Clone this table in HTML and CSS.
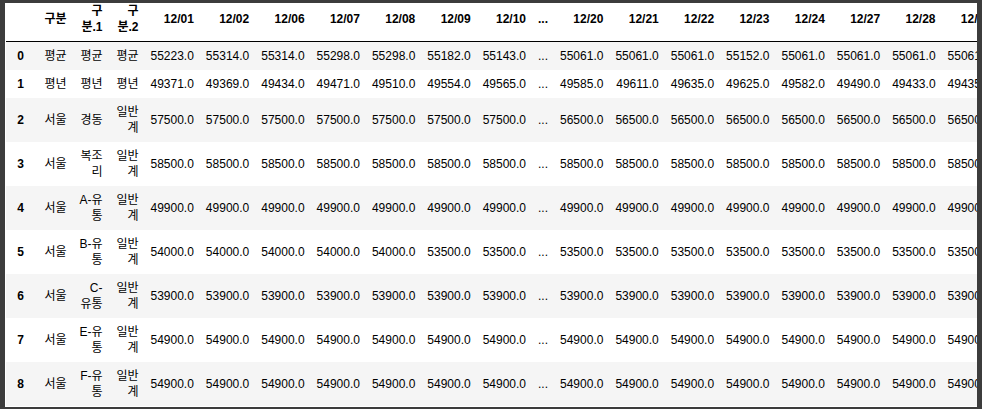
FILE: index.html
```html
<!DOCTYPE html>
<html lang="ko">
<head>
<meta charset="utf-8">
<title>DataFrame</title>
<link rel="stylesheet" href="styles.css">
</head>
<body>
<div class="frame">
  <div class="output">
    <table class="dataframe">
      <colgroup>
        <col class="c-idx"><col class="c-gu"><col class="c-gu1"><col class="c-gu2">
        <col class="c-num"><col class="c-num"><col class="c-num"><col class="c-num"><col class="c-num"><col class="c-num"><col class="c-num">
        <col class="c-dots">
        <col class="c-num"><col class="c-num"><col class="c-num"><col class="c-num"><col class="c-num"><col class="c-num"><col class="c-num"><col class="c-num"><col class="c-num">
      </colgroup>
      <thead>
        <tr>
          <th></th><th>구분</th><th>구<br>분.1</th><th>구<br>분.2</th>
          <th>12/01</th><th>12/02</th><th>12/06</th><th>12/07</th><th>12/08</th><th>12/09</th><th>12/10</th>
          <th>...</th>
          <th>12/20</th><th>12/21</th><th>12/22</th><th>12/23</th><th>12/24</th><th>12/27</th><th>12/28</th><th>12/29</th><th>12/30</th>
        </tr>
      </thead>
      <tbody>
        <tr>
          <th>0</th><td>평균</td><td>평균</td><td>평균</td>
          <td>55223.0</td><td>55314.0</td><td>55314.0</td><td>55298.0</td><td>55298.0</td><td>55182.0</td><td>55143.0</td>
          <td>...</td>
          <td>55061.0</td><td>55061.0</td><td>55061.0</td><td>55152.0</td><td>55061.0</td><td>55061.0</td><td>55061.0</td><td>55061.0</td><td>55061.0</td>
        </tr>
        <tr>
          <th>1</th><td>평년</td><td>평년</td><td>평년</td>
          <td>49371.0</td><td>49369.0</td><td>49434.0</td><td>49471.0</td><td>49510.0</td><td>49554.0</td><td>49565.0</td>
          <td>...</td>
          <td>49585.0</td><td>49611.0</td><td>49635.0</td><td>49625.0</td><td>49582.0</td><td>49490.0</td><td>49433.0</td><td>49435.0</td><td>49435.0</td>
        </tr>
        <tr>
          <th>2</th><td>서울</td><td>경동</td><td>일반<br>계</td>
          <td>57500.0</td><td>57500.0</td><td>57500.0</td><td>57500.0</td><td>57500.0</td><td>57500.0</td><td>57500.0</td>
          <td>...</td>
          <td>56500.0</td><td>56500.0</td><td>56500.0</td><td>56500.0</td><td>56500.0</td><td>56500.0</td><td>56500.0</td><td>56500.0</td><td>56500.0</td>
        </tr>
        <tr>
          <th>3</th><td>서울</td><td>복조<br>리</td><td>일반<br>계</td>
          <td>58500.0</td><td>58500.0</td><td>58500.0</td><td>58500.0</td><td>58500.0</td><td>58500.0</td><td>58500.0</td>
          <td>...</td>
          <td>58500.0</td><td>58500.0</td><td>58500.0</td><td>58500.0</td><td>58500.0</td><td>58500.0</td><td>58500.0</td><td>58500.0</td><td>58500.0</td>
        </tr>
        <tr>
          <th>4</th><td>서울</td><td>A-유<br>통</td><td>일반<br>계</td>
          <td>49900.0</td><td>49900.0</td><td>49900.0</td><td>49900.0</td><td>49900.0</td><td>49900.0</td><td>49900.0</td>
          <td>...</td>
          <td>49900.0</td><td>49900.0</td><td>49900.0</td><td>49900.0</td><td>49900.0</td><td>49900.0</td><td>49900.0</td><td>49900.0</td><td>49900.0</td>
        </tr>
        <tr>
          <th>5</th><td>서울</td><td>B-유<br>통</td><td>일반<br>계</td>
          <td>54000.0</td><td>54000.0</td><td>54000.0</td><td>54000.0</td><td>54000.0</td><td>53500.0</td><td>53500.0</td>
          <td>...</td>
          <td>53500.0</td><td>53500.0</td><td>53500.0</td><td>53500.0</td><td>53500.0</td><td>53500.0</td><td>53500.0</td><td>53500.0</td><td>53500.0</td>
        </tr>
        <tr>
          <th>6</th><td>서울</td><td>C-<br>유통</td><td>일반<br>계</td>
          <td>53900.0</td><td>53900.0</td><td>53900.0</td><td>53900.0</td><td>53900.0</td><td>53900.0</td><td>53900.0</td>
          <td>...</td>
          <td>53900.0</td><td>53900.0</td><td>53900.0</td><td>53900.0</td><td>53900.0</td><td>53900.0</td><td>53900.0</td><td>53900.0</td><td>53900.0</td>
        </tr>
        <tr>
          <th>7</th><td>서울</td><td>E-유<br>통</td><td>일반<br>계</td>
          <td>54900.0</td><td>54900.0</td><td>54900.0</td><td>54900.0</td><td>54900.0</td><td>54900.0</td><td>54900.0</td>
          <td>...</td>
          <td>54900.0</td><td>54900.0</td><td>54900.0</td><td>54900.0</td><td>54900.0</td><td>54900.0</td><td>54900.0</td><td>54900.0</td><td>54900.0</td>
        </tr>
        <tr>
          <th>8</th><td>서울</td><td>F-유<br>통</td><td>일반<br>계</td>
          <td>54900.0</td><td>54900.0</td><td>54900.0</td><td>54900.0</td><td>54900.0</td><td>54900.0</td><td>54900.0</td>
          <td>...</td>
          <td>54900.0</td><td>54900.0</td><td>54900.0</td><td>54900.0</td><td>54900.0</td><td>54900.0</td><td>54900.0</td><td>54900.0</td><td>54900.0</td>
        </tr>
      </tbody>
    </table>
  </div>
</div>
</body>
</html>
```

FILE: styles.css
```css
html, body {
  margin: 0;
  padding: 0;
  background: #3c3c3c;
}

.frame {
  width: 982px;
  height: 409px;
  box-sizing: border-box;
  border-style: solid;
  border-color: #3c3c3c;
  border-width: 3px 5px 2px 5px;
  background: #ffffff;
  overflow: hidden;
}

.output {
  margin-top: -6px;
  margin-left: 1px;
}

.dataframe {
  table-layout: fixed;
  width: 1046.4px;
  border-collapse: collapse;
  border-spacing: 0;
  font-family: "Liberation Sans", "Noto Sans CJK KR", Arial, sans-serif;
  font-size: 12px;
  color: #000000;
}

.c-idx { width: 24px; }
.c-gu { width: 42.5px; }
.c-gu1 { width: 36px; }
.c-gu2 { width: 36px; }
.c-num { width: 55.37px; }
.c-dots { width: 22px; }

.dataframe th,
.dataframe td {
  padding: 6px;
  line-height: 16px;
  text-align: right;
  vertical-align: middle;
  white-space: nowrap;
  overflow: hidden;
  border: none;
}

.dataframe th {
  font-weight: bold;
}

.dataframe thead {
  border-bottom: 1px solid #000000;
}

.dataframe tbody tr:nth-child(odd) {
  background: #f5f5f5;
}

.dataframe tbody tr:nth-child(even) {
  background: #ffffff;
}
```
